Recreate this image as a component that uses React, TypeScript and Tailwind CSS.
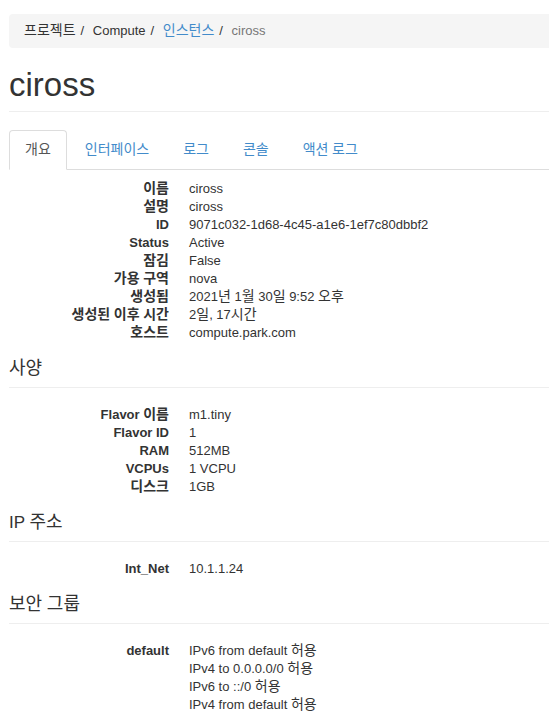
import React from "react";

const font = {
  fontFamily: '"Liberation Sans", Arial, "Noto Sans CJK KR", sans-serif',
};

function K({ t, cls = "text-[14px] leading-[0]" }: { t: string; cls?: string }) {
  const parts = t.split(/([\uAC00-\uD7A3]+)/);
  return (
    <>
      {parts.map((p, i) =>
        /[\uAC00-\uD7A3]/.test(p) ? (
          <span key={i} className={cls}>
            {p}
          </span>
        ) : (
          <React.Fragment key={i}>{p}</React.Fragment>
        )
      )}
    </>
  );
}

type Row = { k: string; v: string[] };

const overview: Row[] = [
  { k: "이름", v: ["ciross"] },
  { k: "설명", v: ["ciross"] },
  { k: "ID", v: ["9071c032-1d68-4c45-a1e6-1ef7c80dbbf2"] },
  { k: "Status", v: ["Active"] },
  { k: "잠김", v: ["False"] },
  { k: "가용 구역", v: ["nova"] },
  { k: "생성됨", v: ["2021년 1월 30일 9:52 오후"] },
  { k: "생성된 이후 시간", v: ["2일, 17시간"] },
  { k: "호스트", v: ["compute.park.com"] },
];

const spec: Row[] = [
  { k: "Flavor 이름", v: ["m1.tiny"] },
  { k: "Flavor ID", v: ["1"] },
  { k: "RAM", v: ["512MB"] },
  { k: "VCPUs", v: ["1 VCPU"] },
  { k: "디스크", v: ["1GB"] },
];

const ip: Row[] = [{ k: "Int_Net", v: ["10.1.1.24"] }];

const sec: Row[] = [
  {
    k: "default",
    v: [
      "IPv6 from default 허용",
      "IPv4 to 0.0.0.0/0 허용",
      "IPv6 to ::/0 허용",
      "IPv4 from default 허용",
    ],
  },
];

function DL({ rows }: { rows: Row[] }) {
  return (
    <div className="flex flex-col">
      {rows.map((r) => (
        <div key={r.k} className="flex leading-[18px]">
          <div className="h-[18px] w-[160px] shrink-0 text-right font-bold whitespace-nowrap">
            <K t={r.k} />
          </div>
          <div className="ml-[20px] flex flex-col whitespace-nowrap">
            {r.v.map((x) => (
              <div key={x} className="h-[18px]">
                <K t={x} />
              </div>
            ))}
          </div>
        </div>
      ))}
    </div>
  );
}

function Heading({ t }: { t: string }) {
  return (
    <div className="mt-[17px] h-[29px] pb-[8px] border-b border-[#eeeeee] text-[17px] leading-[20px] text-[#333333] whitespace-nowrap">
      <K t={t} cls="text-[18px] leading-[0]" />
    </div>
  );
}

export default function App() {
  const tabs = ["개요", "인터페이스", "로그", "콘솔", "액션 로그"];
  return (
    <div
      className="min-h-[721px] bg-white pl-[9px] pt-[14px] text-[13px] text-[#333333]"
      style={font}
    >
      {/* breadcrumb */}
      <div className="flex h-[34px] items-center rounded-l-[4px] bg-[#f5f5f5] pl-[15px] leading-[18px] whitespace-nowrap">
        <span>
          <K t="프로젝트" />
        </span>
        <span className="px-[5px] text-[#333333]">/&nbsp;</span>
        <span>Compute</span>
        <span className="px-[5px] text-[#333333]">/&nbsp;</span>
        <span className="text-[#428bca]">
          <K t="인스턴스" />
        </span>
        <span className="px-[5px] text-[#333333]">/&nbsp;</span>
        <span className="text-[#777777]">ciross</span>
      </div>

      {/* title */}
      <div className="mt-[19px] border-b border-[#eeeeee] pb-[8px]">
        <h1 className="text-[33px] leading-[36px] font-normal text-[#333333]">
          ciross
        </h1>
      </div>

      {/* tabs */}
      <div className="mt-[18px] flex h-[40px] border-b border-[#dddddd]">
        {tabs.map((t, i) => (
          <div
            key={t}
            className={
              i === 0
                ? "mr-[2px] -mb-px h-[40px] rounded-t-[4px] border border-[#dddddd] border-b-white bg-white px-[15px] py-[10px] leading-[18px] text-[#555555] whitespace-nowrap"
                : "mr-[2px] -mb-px h-[40px] rounded-t-[4px] border border-transparent px-[15px] py-[10px] leading-[18px] text-[#428bca] whitespace-nowrap"
            }
          >
            <K t={t} />
          </div>
        ))}
      </div>

      <div className="pt-[10px]">
        <DL rows={overview} />
        <Heading t="사양" />
        <div className="mt-[18px]">
          <DL rows={spec} />
        </div>
        <Heading t="IP 주소" />
        <div className="mt-[18px]">
          <DL rows={ip} />
        </div>
        <Heading t="보안 그룹" />
        <div className="mt-[18px]">
          <DL rows={sec} />
        </div>
      </div>
    </div>
  );
}
